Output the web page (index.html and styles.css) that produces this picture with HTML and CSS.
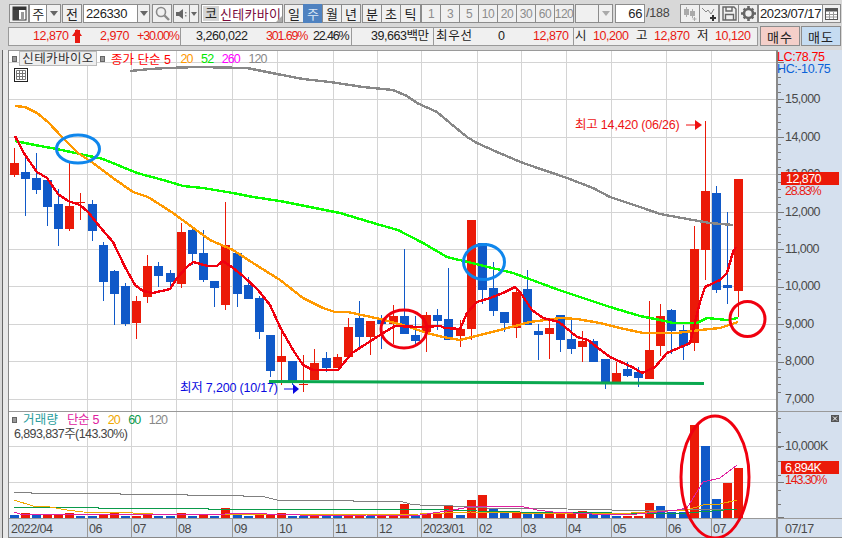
FILE: index.html
```html
<!DOCTYPE html>
<html lang="ko">
<head>
  <meta charset="UTF-8" />
  <title>신테카바이오 주봉 차트</title>
  <link rel="stylesheet" href="styles.css">
</head>
<body>
  <div class="window">
    <div class="toolbar">
      <button class="btn w19">
        <svg width="15" height="15" viewBox="0 0 15 15"><rect x="1" y="1" width="13" height="13" fill="#fff" stroke="#333"/><rect x="1" y="1" width="13" height="3" fill="#333"/><rect x="1" y="4" width="6" height="10" fill="#444"/><rect x="9" y="6" width="3" height="8" fill="#999"/></svg>
      </button>
      <div class="combo gap1">
        <span class="field w18 center">주</span><span class="drop w14"><i class="tri"></i></span>
      </div>
      <button class="btn w19 gap1">전</button>
      <div class="combo gap2">
        <span class="field w55">226330</span><span class="drop w12"><i class="tri"></i></span>
      </div>
      <button class="btn w19 gap2">
        <svg width="15" height="15" viewBox="0 0 15 15" fill="none" stroke="#8a8a8a"><circle cx="6" cy="6" r="4.5" stroke-width="1.6"/><path d="M9.5 9.5 14 14" stroke-width="2.4"/></svg>
      </button>
      <div class="combo gap2">
        <span class="drop w17"><svg width="12" height="12" viewBox="0 0 12 12"><path d="M0 4h3l4-3v10L3 8H0z" fill="#666"/><path d="M9 4h1.5v1.5H9zM9 7h1.5v1.5H9z" fill="#888"/></svg></span><span class="drop w9"><i class="tri small"></i></span>
      </div>
      <div class="stock gap2">
        <span class="stock-mark">코</span><span class="stock-name">신테카바이</span><i class="corner"></i>
      </div>
      <button class="btn w19 gap1">일</button><button class="btn w19 active">주</button><button class="btn w19">월</button><button class="btn w19">년</button>
      <button class="btn w19 gap2">분</button><button class="btn w19">초</button><button class="btn w20">틱</button>
      <button class="btn w19 dim gap1">1</button><button class="btn w19 dim">3</button><button class="btn w19 dim">5</button><button class="btn w19 dim">10</button><button class="btn w19 dim">20</button><button class="btn w19 dim">30</button><button class="btn w19 dim">60</button><button class="btn w19 dim">120</button>
      <div class="combo gap2">
        <span class="drop w24"></span><span class="drop w14"><i class="tri light"></i></span>
      </div>
      <span class="field w30 right gap2">66</span>
      <span class="count">/188</span>
      <button class="btn w19 gap1">
        <svg width="15" height="15" viewBox="0 0 15 15" fill="#aaa"><path d="M3 1v2H1v6h2v2h1V9h2V3H4V1zM9 3v2H7v5h2v2h1v-2h2V5h-2V3z"/><path d="M11 11h1v1.5h1.5v1H12V15h-1v-1.5H9.500v-1H11z"/></svg>
      </button>
      <button class="btn w19">
        <svg width="17" height="15" viewBox="0 0 17 15" fill="none"><path d="M1 2l4 4 2-2 3 4 3-5" stroke="#888"/><path d="M11 9h2v2h2v2h-2v2h-2v-2H9v-2h2z" fill="#333"/></svg>
      </button>
      <button class="btn w19 gap1">
        <svg width="15" height="15" viewBox="0 0 15 15" fill="none" stroke="#666" stroke-width="1.4"><path d="M1 1h11l2 2v11H1z"/><path d="M4 1v4h6V1M3.500 14V8.500h8V14"/></svg>
      </button>
      <button class="btn w19">
        <svg width="15" height="15" viewBox="0 0 15 15"><circle cx="7.500" cy="7.500" r="4.500" fill="none" stroke="#666" stroke-width="2.600"/><path d="M6.200 0h2.600v3H6.200zM6.200 12h2.600v3H6.200zM0 6.200h3v2.600H0zM12 6.200h3v2.600h-3zM1.800 3.600l1.800-1.800 2 2-1.800 1.800zM9.400 11.200l1.800-1.800 2 2-1.800 1.800zM1.800 11.400l2-2 1.800 1.800-2 2zM9.400 3.800l2-2 1.800 1.800-2 2z" fill="#666"/></svg>
      </button>
      <div class="combo gap1">
        <span class="field w65 center">2023/07/17</span>
        <span class="drop w18"><svg width="13" height="12" viewBox="0 0 13 12"><rect x=".5" y=".5" width="12" height="11" fill="#fff" stroke="#555"/><rect x="1" y="1" width="11" height="2.500" fill="#555"/><path d="M1 6.500h11M1 9h11M4.500 4v7M8.500 4v7" stroke="#999"/></svg></span>
      </div>
    </div>

    <div class="quote-row">
      <div class="quote">
        <div class="cell c1">
          <span class="red p1">12,870</span><i class="up-arrow"></i><span class="red p2">2,970</span><span class="red pc p3">+30.00%</span>
        </div>
        <div class="cell c2">
          <span class="n1">3,260,022</span><span class="red pc n2">301.69%</span><span class="pc n3">22.46%</span>
        </div>
        <div class="cell c3">
          <span class="n4">39,663백만</span>
        </div>
        <div class="cell c4">
          <span class="k1">최우선</span><span class="n5">0</span><span class="red n6">12,870</span>
        </div>
        <div class="cell c5">
          <span class="o1">시</span><span class="red o2">10,200</span><span class="o3">고</span><span class="red o4">12,870</span><span class="o5">저</span><span class="red o6">10,120</span>
        </div>
      </div>
      <button class="trade buy">매수</button>
      <button class="trade sell">매도</button>
    </div>

    <div class="chart">
      <svg class="canvas" width="842" height="488" viewBox="0 50 842 488">
        <g id="grid" shape-rendering="crispEdges"></g>
        <g id="axes" shape-rendering="crispEdges"></g>
        <g id="labels" class="axis-text"></g>
        <g id="candles" shape-rendering="crispEdges"></g>
        <g id="lines" fill="none" shape-rendering="crispEdges"></g>

        <!-- hand-drawn marks on the chart -->
        <path d="M269 381.500 704 383.500" stroke="#0aa84f" stroke-width="3" fill="none"/>
        <ellipse cx="78" cy="149" rx="21.500" ry="14" class="mark blue"/>
        <ellipse cx="484" cy="262" rx="20.500" ry="17.500" class="mark blue"/>
        <ellipse cx="404" cy="329" rx="23" ry="19" class="mark red"/>
        <circle cx="747.500" cy="319" r="17.500" class="mark red"/>
        <ellipse cx="715" cy="477" rx="34" ry="61" class="mark red"/>

        <text x="575" y="129" class="note red-text">최고 14,420 (06/26)</text>
        <path d="M686 125h10" stroke="#f01010"/>
        <path d="M695 120l7 5-7 5z" fill="#f01010"/>
        <text x="180" y="392" class="note blue-text">최저 7,200 (10/17)</text>
        <path d="M284 389h10" stroke="#0808e0"/>
        <path d="M293 384l6 5-6 5z" fill="#0808e0"/>

        <rect x="781" y="172" width="58" height="13" fill="#eb1a08"/>
        <text x="786" y="183" class="tag">12,870</text>
        <text x="785" y="195" class="pct">28.83%</text>
        <rect x="781" y="461" width="58" height="13" fill="#eb1a08"/>
        <text x="785" y="472" class="tag">6,894K</text>
        <text x="785" y="484" class="pct">143.30%</text>

        <rect x="831" y="415" width="8" height="7" fill="#555"/>
        <path d="M833 416.500 837 420.500M837 416.500 833 420.500" stroke="#fff"/>
      </svg>

      <div class="legend">
        <i class="square"></i>
        <span class="legend-name">신테카바이오</span>
        <i class="square"></i>
        <span class="l-red">종가 단순 5</span>
        <span class="l-orange">20</span>
        <span class="l-green">52</span>
        <span class="l-pink">260</span>
        <span class="l-gray">120</span>
      </div>

      <div class="table-icon">
        <svg width="10" height="10" viewBox="0 0 10 10" fill="none" stroke="#777"><path d="M.5.5h9v9h-9zM.5 3.500h9M.5 6.500h9M3.500.5v9M6.500.5v9"/></svg>
      </div>

      <div class="hilo">
        <div class="lc">LC:78.75</div>
        <div class="hc">HC:-10.75</div>
      </div>

      <div class="vol-legend">
        <div class="vol-names">
          <i class="square"></i>
          <span class="v-teal">거래량</span>
          <span class="v-pink">단순 5</span>
          <span class="v-amber">20</span>
          <span class="v-green">60</span>
          <span class="l-gray">120</span>
        </div>
        <div class="vol-total">6,893,837주(143.30%)</div>
      </div>
    </div>
  </div>
  <script src="chart.js"></script>
</body>
</html>
```

FILE: styles.css
```css
* { margin: 0; padding: 0; box-sizing: border-box; }
body {
  width: 842px;
  height: 538px;
  overflow: hidden;
  background: #fff;
  font-family: "Liberation Sans", "Noto Sans CJK KR", sans-serif;
  font-size: 12px;
  color: #222;
}
.window {
  width: 842px;
  height: 538px;
  padding: 4px 0 0 9px;
  background: #d8d8d8;
  position: relative;
}
button { font: inherit; color: inherit; }

/* top toolbar */
.toolbar {
  display: flex;
  align-items: stretch;
  height: 19px;
}
.btn {
  display: flex;
  align-items: center;
  justify-content: center;
  height: 19px;
  background: #f0f0f0;
  border: 1px solid #8c8c8c;
  margin-right: -1px;
  font-size: 13px;
  flex: none;
  overflow: hidden;
}
.btn.active { background: #4f82c0; color: #dde8f5; border-color: #4f82c0; }
.btn.dim { color: #8c8c8c; font-size: 12px; letter-spacing: -.5px; }
.w19 { width: 20px; }
.w20 { width: 21px; }
.gap1 { margin-left: 1px; }
.gap2 { margin-left: 2px; }
.combo { display: flex; flex: none; }
.field {
  display: flex;
  align-items: center;
  height: 19px;
  background: #fff;
  border: 1px solid #8c8c8c;
  font-size: 13px;
  padding: 0 2px;
  letter-spacing: -.4px;
  flex: none;
}
.center { justify-content: center; }
.right { justify-content: flex-end; }
.w18 { width: 18px; }
.w55 { width: 55px; }
.w30 { width: 30px; }
.w65 { width: 65px; }
.drop {
  display: flex;
  align-items: center;
  justify-content: center;
  height: 19px;
  background: #f0f0f0;
  border: 1px solid #8c8c8c;
  margin-left: -1px;
  flex: none;
}
.combo .drop:first-child { margin-left: 0; }
.w9 { width: 10px; }
.w12 { width: 13px; }
.w14 { width: 15px; }
.w17 { width: 17px; }
.drop.w18 { width: 19px; }
.w24 { width: 24px; }
.tri {
  width: 0;
  height: 0;
  border-left: 4px solid transparent;
  border-right: 4px solid transparent;
  border-top: 5px solid #666;
}
.tri.small { border-left-width: 3px; border-right-width: 3px; border-top-width: 4px; }
.tri.light { border-top-color: #aaa; }
.stock {
  display: flex;
  align-items: center;
  width: 82px;
  height: 19px;
  background: #fff;
  border: 1px solid #8c8c8c;
  position: relative;
  flex: none;
}
.stock-mark {
  width: 16px;
  height: 15px;
  margin-left: 1px;
  background: #d4d4d4;
  text-align: center;
  font-size: 13px;
  line-height: 15px;
}
.stock-name { margin-left: 1px; font-size: 13px; color: #7a0a3c; white-space: nowrap; letter-spacing: .3px; }
.corner {
  position: absolute;
  right: 0;
  bottom: 0;
  border-left: 6px solid transparent;
  border-bottom: 6px solid #aaa;
}
.count { flex: none; width: 34px; padding-left: 1px; line-height: 19px; font-size: 12.500px; letter-spacing: -.2px; color: #444; }

/* quote strip */
.quote-row {
  display: flex;
  height: 20px;
  margin: 4px 0 0 -1px;
}
.quote {
  display: flex;
  width: 750px;
  height: 19px;
  background: #f0f0f0;
  border: 1px solid #9a9a9a;
  flex: none;
  font-size: 12.500px;
  letter-spacing: -.45px;
  line-height: 17px;
}
.cell { position: relative; height: 17px; border-right: 1px solid #9a9a9a; flex: none; }
.cell span { position: absolute; top: 0; white-space: nowrap; }
.cell:last-child { border-right: 0; }
.c1 { width: 172px; }
.c2 { width: 171px; }
.c3 { width: 82px; }
.c4 { width: 140px; }
.c5 { flex: 1; }
.red { color: #e81a12; }
.pc { letter-spacing: -1.150px; }
.p1 { left: 24px; }
.up-arrow {
  position: absolute;
  left: 66px;
  top: 2px;
  width: 5px;
  height: 13px;
  background: #e81a12;
}
.up-arrow::before {
  content: "";
  position: absolute;
  left: -3px;
  top: -1px;
  border-left: 5.500px solid transparent;
  border-right: 5.500px solid transparent;
  border-bottom: 7px solid #e81a12;
}
.p2 { left: 91px; }
.p3 { left: 128px; }
.n1 { left: 15px; }
.n2 { left: 85px; }
.n3 { left: 132px; }
.n4 { left: 19px; }
.k1 { left: 2px; letter-spacing: .7px; }
.n5 { left: 64px; }
.n6 { left: 99px; }
.o1 { left: 1px; }
.o2 { left: 19px; }
.o3 { left: 62px; }
.o4 { left: 80px; }
.o5 { left: 123px; }
.o6 { left: 141px; }
.trade {
  width: 40px;
  height: 20px;
  margin-top: -1px;
  border: 1px solid #8c8c8c;
  font-size: 13px;
  letter-spacing: 1px;
  flex: none;
}
.buy { background: #f4cfc9; margin-left: 2px; }
.sell { background: #c5dcf2; margin-left: 1px; }

/* chart */
.chart {
  position: absolute;
  left: 0;
  top: 50px;
  width: 842px;
  height: 488px;
  background: #fff;
}
.canvas { display: block; }
.axis-text text { font-size: 12.500px; letter-spacing: -.55px; fill: #4a4a4a; }
.mark { fill: none; stroke-width: 3; }
.mark.blue { stroke: #0f86ec; }
.mark.red { stroke: #f0000f; }
.note { font-size: 12.500px; letter-spacing: -.2px; }
.red-text { fill: #ee1515; }
.blue-text { fill: #0a0ae0; }
.tag { fill: #fff; font-size: 12.500px; letter-spacing: -.55px; }
.pct { fill: #e81a12; font-size: 12.500px; letter-spacing: -1.150px; }
.legend {
  position: absolute;
  left: 12px;
  top: 1px;
  display: flex;
  align-items: center;
  height: 15px;
  gap: 8.500px;
  font-size: 12.500px;
  letter-spacing: -.9px;
}
.square { width: 5px; height: 6px; background: #999; border: 1px solid #666; flex: none; }
.legend-name {
  width: 78px;
  height: 15px;
  line-height: 14px;
  margin-left: -6.500px;
  margin-right: -5.500px;
  text-align: center;
  background: #eee;
  border: 1px solid #bbb;
  color: #333;
  letter-spacing: .4px;
}
.l-red { color: #f00; margin-left: -2.500px; width: 61px; white-space: nowrap; letter-spacing: 0; }
.l-orange { color: #ff9900; }
.l-green { color: #00e600; }
.l-pink { color: #f0f; }
.l-gray { color: #888; }
.table-icon {
  position: absolute;
  left: 14px;
  top: 18px;
  width: 14px;
  height: 14px;
  display: flex;
  align-items: center;
  justify-content: center;
  background: #fff;
  border: 1px solid #222;
}
.hilo {
  position: absolute;
  left: 777px;
  top: 1px;
  font-size: 12.500px;
  letter-spacing: -.4px;
  line-height: 12px;
}
.lc { color: #f00; }
.hc { color: #0a62d8; }
.vol-legend { position: absolute; left: 12px; top: 363px; font-size: 12.500px; line-height: 14px; }
.vol-names { display: flex; align-items: center; gap: 8.500px; letter-spacing: -.9px; }
.vol-names .square { margin-right: -2.500px; }
.v-teal { color: #2a9d9d; letter-spacing: .3px; }
.v-pink { color: #e020a0; letter-spacing: -.3px; }
.v-amber { color: #f0a800; }
.v-green { color: #0a9a4a; }
.vol-total { margin-left: 2px; color: #444; letter-spacing: -.6px; }
```

FILE: chart.js
```js
const NS = 'http://www.w3.org/2000/svg';
const RED = '#eb1a08';
const BLUE = '#1059c8';

function add(parent, tag, attrs, text) {
  const el = document.createElementNS(NS, tag);
  for (const k in attrs) el.setAttribute(k, attrs[k]);
  if (text) el.textContent = text;
  document.getElementById(parent).appendChild(el);
}

function box(parent, x, y, w, h, fill) {
  add(parent, 'rect', { x: x, y: y, width: w, height: h, fill: fill });
}

// left edge of every weekly bar
const lefts = [10,21,32,43,54,65,76,88,99,110,121,132,143,154,166,177,188,199,210,221,233,244,255,
  266,277,288,299,310,322,333,344,355,366,377,389,400,411,422,433,444,456,467,478,489,500,512,523,
  534,545,556,567,578,589,601,612,623,634,645,656,667,679,690,701,712,723,734];

// up?, wick top, body top, body bottom, wick bottom (screen y)
const candles = [
  [1,148,163,175,177],[0,155,172,179,216],[0,153,178,190,194],[0,178,180,207,226],[0,189,204,229,246],
  [1,163,206,229,231],[1,193,202,203,220],[0,200,204,231,241],[0,242,245,282,301],[0,270,271,294,325],
  [0,283,286,324,326],[1,296,301,323,339],[1,255,266,297,303],[0,262,266,276,287],[0,270,273,282,290],
  [1,223,232,284,288],[0,229,230,254,265],[0,230,253,280,282],[0,281,281,288,307],[1,202,245,305,310],
  [0,253,253,294,307],[0,277,285,299,299],[0,296,298,332,339],[0,335,335,371,377],[1,327,356,362,385],
  [0,361,361,381,385],[1,355,384,385,392],[1,349,363,380,380],[0,352,358,368,372],[1,354,357,368,368],
  [1,318,327,357,357],[0,301,318,337,350],[1,321,321,337,355],[0,315,319,324,349],[1,305,316,324,344],
  [0,249,316,334,334],[0,316,335,341,346],[1,312,315,332,352],[0,309,315,321,330],[0,268,319,340,340],
  [1,320,329,336,347],[1,220,220,329,340],[0,243,243,290,304],[0,262,288,311,316],[0,312,312,323,332],
  [1,287,292,328,338],[0,270,289,325,325],[0,324,331,335,360],[1,319,328,334,359],[0,315,315,340,352],
  [0,318,339,349,354],[1,331,341,347,362],[0,339,341,362,362],[0,359,359,382,389],[1,362,373,382,382],
  [0,362,369,376,377],[0,367,372,378,387],[1,301,350,379,379],[1,304,316,346,356],[0,309,310,331,354],
  [0,325,330,346,360],[1,226,249,343,351],[1,121,191,250,280],[0,186,193,290,293],[0,212,285,288,304],
  [1,179,179,291,317]
];

// volume bars: up?, top y
const volumes = [
  [0,515],[1,513],[0,515],[1,515],[1,514],[1,513],[0,516],[0,516],[1,514],[1,512],[0,516],[1,516],
  [1,514],[0,516],[0,516],[1,513],[0,516],[1,515],[0,516],[1,508],[0,515],[0,516],[1,515],[1,514],
  [1,513],[0,516],[0,516],[1,515],[0,516],[0,516],[1,514],[1,514],[0,516],[1,516],[1,514],[1,504],
  [0,516],[1,514],[1,514],[1,506],[0,515],[1,500],[1,495],[0,508],[0,513],[1,512],[0,512],[0,513],
  [1,512],[1,512],[1,512],[1,511],[0,513],[0,515],[0,516],[1,516],[1,516],[1,503],[0,506],[0,512],
  [0,512],[1,425],[0,446],[0,499],[1,483],[1,468]
];

const ma5 = '15,136 25,155 37,172 47,178 58,194 68,201 80,205 88,212 100,227 113,242 125,267 135,285 143,291 153,293 170,289 177,278 187,267 193,262 208,266 217,266 223,261 233,268 243,276 258,290 270,305 280,327 293,350 303,365 313,370 338,370 352,353 380,335 395,326 420,327 440,326 445,328 460,329 467,313 477,302 490,298 503,293 515,287 520,292 532,310 543,318 559,322 565,327 577,337 588,340 598,348 610,357 632,367 642,373 655,367 667,353 690,343 700,302 705,287 720,280 727,273 733,252 736,247';
const ma20 = '15,106 25,107 37,113 48,122 62,137 78,153 93,163 113,178 133,192 148,197 173,213 192,227 210,240 233,250 253,263 280,280 303,298 323,308 335,312 348,312 380,319 403,325 427,333 443,337 460,340 480,335 500,330 530,322 560,318 577,319 600,323 620,328 643,333 677,333 700,330 720,328 738,322';
const ma52 = '15,141 40,146 57,149 80,154 103,159 120,166 137,173 163,180 183,186 203,188 233,193 253,197 280,201 300,205 340,213 380,225 398,230 423,243 447,257 480,265 513,273 559,290 577,296 610,307 640,316 660,320 673,323 697,323 707,318 727,320 738,318';
const ma120 = '130,71 150,69 167,68 197,67 247,68 277,74 303,79 330,82 363,87 393,90 407,96 417,103 437,112 450,123 467,137 477,143 497,152 523,163 567,178 593,188 610,197 643,208 660,214 693,220 710,223 733,225';

const volGray = '14,492 31,492 31,493 120,493 120,494 187,494 187,495 243,495 243,496 265,497 277,500 353,500 353,501 400,501 410,504 420,505 453,506 487,508 520,508 567,509 612,510 677,510 737,509';
const volGreen = '14,507 98,507 98,508 208,508 208,509 420,509 477,511 520,512 612,513 687,513 737,509';
const volAmber = '14,500 33,506 50,507 67,510 83,512 133,513 153,514 320,515 420,514 470,512 520,513 612,514 687,510 703,505 720,504 737,500';
const volPink = '14,512 20,514 200,514 220,515 230,513 240,513 267,514 333,516 367,515 400,515 420,515 447,511 470,507 490,506 520,506 537,510 553,512 612,515 637,514 677,510 687,508 703,482 720,478 737,465';

// grid
const priceRows = [99, 137, 174, 212, 249, 286, 324, 361, 399];
const months = [
  [87, '06'], [131, '07'], [176, '08'], [232, '09'], [277, '10'], [333, '11'], [377, '12'],
  [421, '2023/01'], [477, '02'], [521, '03'], [566, '04'], [611, '05'], [666, '06'], [711, '07']
];
for (const m of months) box('grid', m[0], 50, 1, 468, '#d4d4d4');
for (const y of [62].concat(priceRows, [446, 482])) box('grid', 9, y, 767, 1, '#d4d4d4');

// frame, side strip and axes
box('axes', 0, 50, 2, 488, '#d8d8d8');
box('axes', 2, 50, 1, 488, '#666');
box('axes', 3, 50, 5, 488, '#e8e8e8');
box('axes', 8, 50, 1, 488, '#888');
box('axes', 9, 50, 767, 1, '#9a9a9a');
box('axes', 9, 411, 767, 1, '#999');
box('axes', 776, 50, 66, 488, '#d5e0ee');
box('axes', 776, 50, 2, 488, '#8a8a8a');
box('axes', 9, 518, 833, 1, '#999');
box('axes', 9, 519, 767, 18, '#d5e0ee');
box('axes', 9, 537, 833, 1, '#888');
box('axes', 776, 411, 66, 1, '#999');

// price axis
for (let i = 0; i < 45; i++) {
  const y = 61.500 + i * 7.500;
  box('axes', 778, Math.round(y), i % 5 === 0 ? 6 : 3, 1, '#777');
}
const prices = ['15,000', '14,000', '13,000', '12,000', '11,000', '10,000', '9,000', '8,000', '7,000'];
prices.forEach(function (p, i) {
  add('labels', 'text', { x: 785, y: priceRows[i] + 4 }, p);
});

// volume axis
for (let y = 418; y < 518; y += 14.300) box('axes', 778, Math.round(y), 3, 1, '#777');
box('axes', 778, 446, 6, 1, '#777');
box('axes', 778, 482, 6, 1, '#777');
box('axes', 778, 517, 6, 1, '#777');
add('labels', 'text', { x: 785, y: 450 }, '10,000K');

// time axis
add('labels', 'text', { x: 11, y: 533 }, '2022/04');
for (const m of months) {
  box('axes', m[0], 519, 1, 18, '#999');
  add('labels', 'text', { x: m[0] + 2, y: 533 }, m[1]);
}
add('labels', 'text', { x: 785, y: 533 }, '07/17');

// candles
candles.forEach(function (c, i) {
  const fill = c[0] ? RED : BLUE;
  box('candles', lefts[i] + 4, c[1], 1, c[4] - c[1], fill);
  box('candles', lefts[i], c[2], 9, Math.max(c[3] - c[2], 1), fill);
});
volumes.forEach(function (v, i) {
  box('candles', lefts[i], v[1], 9, 518 - v[1], v[0] ? RED : BLUE);
});

// moving averages
const series = [
  [ma120, '#888', 2.400], [ma52, '#0aff00', 2.400], [ma20, '#ff9900', 2.400], [ma5, '#f0000f', 2.400],
  [volGray, '#808080', 1], [volGreen, '#0a9a4a', 1], [volAmber, '#f0a800', 1], [volPink, '#e020a0', 1]
];
for (const s of series) {
  add('lines', 'polyline', { points: s[0], stroke: s[1], 'stroke-width': s[2] });
}
```
